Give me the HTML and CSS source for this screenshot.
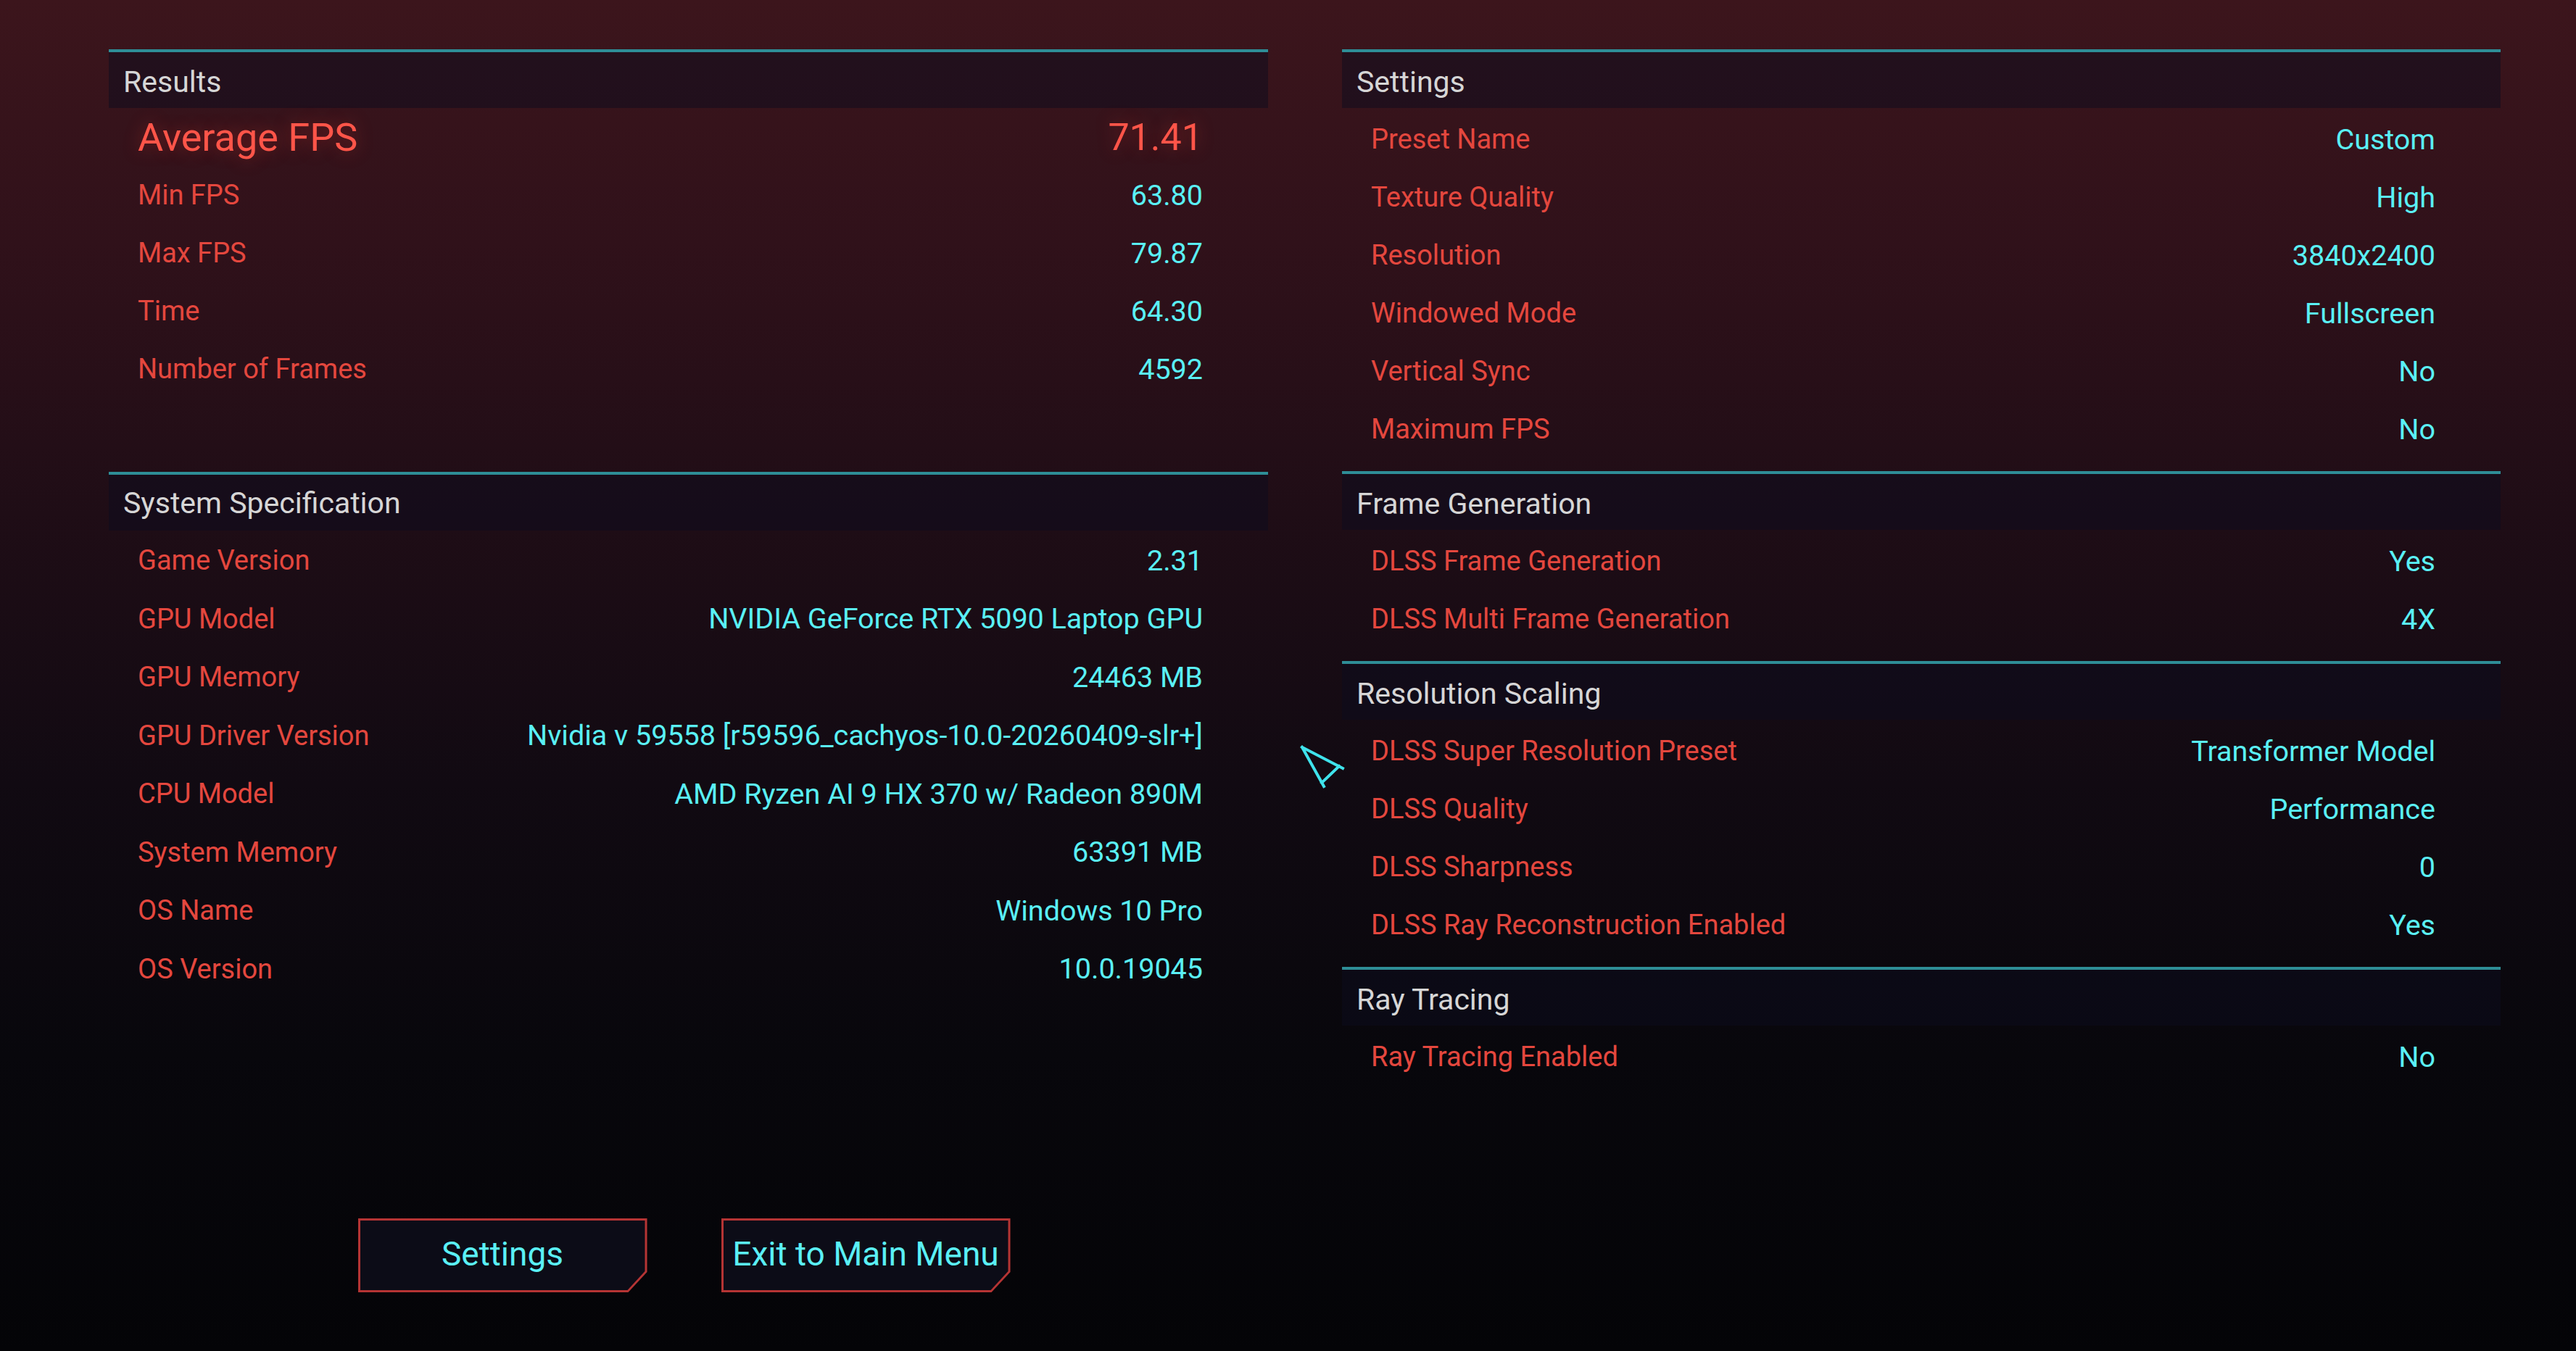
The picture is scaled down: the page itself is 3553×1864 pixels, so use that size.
FILE: index.html
```html
<!DOCTYPE html>
<html lang="en">
<head>
	<meta charset="UTF-8">
	<title>Benchmark Results</title>
	<link rel="stylesheet" href="styles.css">
</head>
<body>
	<div class="screen">
		<div class="columns">
			<div class="col">
				<section class="group results">
					<h2 class="group-title">Results</h2>
					<div class="row big"><span class="label">Average FPS</span><span class="value">71.41</span></div>
					<div class="row"><span class="label">Min FPS</span><span class="value">63.80</span></div>
					<div class="row"><span class="label">Max FPS</span><span class="value">79.87</span></div>
					<div class="row"><span class="label">Time</span><span class="value">64.30</span></div>
					<div class="row"><span class="label">Number of Frames</span><span class="value">4592</span></div>
				</section>
				<section class="group spec">
					<h2 class="group-title">System Specification</h2>
					<div class="row"><span class="label">Game Version</span><span class="value">2.31</span></div>
					<div class="row"><span class="label">GPU Model</span><span class="value">NVIDIA GeForce RTX 5090 Laptop GPU</span></div>
					<div class="row"><span class="label">GPU Memory</span><span class="value">24463 MB</span></div>
					<div class="row"><span class="label">GPU Driver Version</span><span class="value">Nvidia v 59558 [r59596_cachyos-10.0-20260409-slr+]</span></div>
					<div class="row"><span class="label">CPU Model</span><span class="value">AMD Ryzen AI 9 HX 370 w/ Radeon 890M</span></div>
					<div class="row"><span class="label">System Memory</span><span class="value">63391 MB</span></div>
					<div class="row"><span class="label">OS Name</span><span class="value">Windows 10 Pro</span></div>
					<div class="row"><span class="label">OS Version</span><span class="value">10.0.19045</span></div>
				</section>
				<div class="buttons">
					<div class="btn"><div class="btn-inner">Settings</div></div>
					<div class="btn"><div class="btn-inner">Exit to Main Menu</div></div>
				</div>
			</div>
			<div class="col right">
				<section class="group">
					<h2 class="group-title">Settings</h2>
					<div class="row"><span class="label">Preset Name</span><span class="value">Custom</span></div>
					<div class="row"><span class="label">Texture Quality</span><span class="value">High</span></div>
					<div class="row"><span class="label">Resolution</span><span class="value">3840x2400</span></div>
					<div class="row"><span class="label">Windowed Mode</span><span class="value">Fullscreen</span></div>
					<div class="row"><span class="label">Vertical Sync</span><span class="value">No</span></div>
					<div class="row"><span class="label">Maximum FPS</span><span class="value">No</span></div>
				</section>
				<section class="group">
					<h2 class="group-title">Frame Generation</h2>
					<div class="row"><span class="label">DLSS Frame Generation</span><span class="value">Yes</span></div>
					<div class="row"><span class="label">DLSS Multi Frame Generation</span><span class="value">4X</span></div>
				</section>
				<section class="group">
					<h2 class="group-title">Resolution Scaling</h2>
					<div class="row"><span class="label">DLSS Super Resolution Preset</span><span class="value">Transformer Model</span></div>
					<div class="row"><span class="label">DLSS Quality</span><span class="value">Performance</span></div>
					<div class="row"><span class="label">DLSS Sharpness</span><span class="value">0</span></div>
					<div class="row"><span class="label">DLSS Ray Reconstruction Enabled</span><span class="value">Yes</span></div>
				</section>
				<section class="group">
					<h2 class="group-title">Ray Tracing</h2>
					<div class="row"><span class="label">Ray Tracing Enabled</span><span class="value">No</span></div>
				</section>
			</div>
		</div>
		<!-- mouse pointer -->
		<svg class="cursor" width="120" height="120" viewBox="0 0 120 120">
			<path d="M36 31 L92 60 M36 31 L66 85 M87 57 L63 80" fill="none" stroke="#3fe3ec" stroke-width="4" stroke-linecap="square"/>
		</svg>
	</div>
</body>
</html>
```

FILE: styles.css
```css
* {
	margin: 0;
	padding: 0;
	box-sizing: border-box;
}
body {
	width: 3553px;
	height: 1864px;
	overflow: hidden;
	font-family: Roboto, "Liberation Sans", sans-serif;
	background: linear-gradient(to bottom, #3c151c 0%, #30111a 18%, #1f0d16 38%, #110a12 58%, #08070c 78%, #040407 100%);
}
.screen {
	position: relative;
	height: 1864px;
	padding: 68px 104px 0 150px;
}
.columns {
	display: grid;
	grid-template-columns: 1599px 1598px;
	column-gap: 102px;
}
.group {
	border-top: 4px solid #2e8e97;
}
.group-title {
	height: 77px;
	display: flex;
	align-items: center;
	padding: 4px 0 0 20px;
	background: rgba(12, 12, 30, 0.5);
	color: #d6d6d6;
	font-size: 41px;
	font-weight: 400;
}
.spec .group-title {
	padding-top: 1px;
}
.row {
	height: 80px;
	display: flex;
	justify-content: space-between;
	align-items: center;
	padding: 6px 90px 0 40px;
	font-size: 38px;
}
.label {
	color: #e4473e;
}
.value {
	color: #5af0f5;
	font-size: 39.5px;
}
.results {
	margin-bottom: 104px;
}
.results .row {
	padding-top: 4px;
}
.results .row.big {
	height: 78px;
	padding-top: 2px;
	font-size: 54px;
}
.row.big .value {
	font-size: 52px;
}
.row.big .label,
.row.big .value {
	color: #ff5549;
	text-shadow: 0 0 24px rgba(255, 60, 50, 0.35);
}
.spec .row {
	height: 80.5px;
	padding-top: 2px;
}
.right .group {
	margin-bottom: 21px;
}
.buttons {
	display: flex;
	justify-content: center;
	gap: 102px;
	margin-top: 305px;
	padding-right: 12px;
}
.btn {
	width: 399px;
	height: 102px;
	padding: 3px;
	background: #b53434;
	clip-path: polygon(0 0, 100% 0, 100% 74px, calc(100% - 26px) 100%, 0 100%);
}
.btn-inner {
	height: 100%;
	display: flex;
	align-items: center;
	justify-content: center;
	padding-bottom: 4px;
	background: #0c0c17;
	clip-path: polygon(0 0, 100% 0, 100% 70px, calc(100% - 24px) 100%, 0 100%);
	color: #5af0f5;
	font-size: 46px;
}
.cursor {
	position: absolute;
	left: 1760px;
	top: 1000px;
}
```
